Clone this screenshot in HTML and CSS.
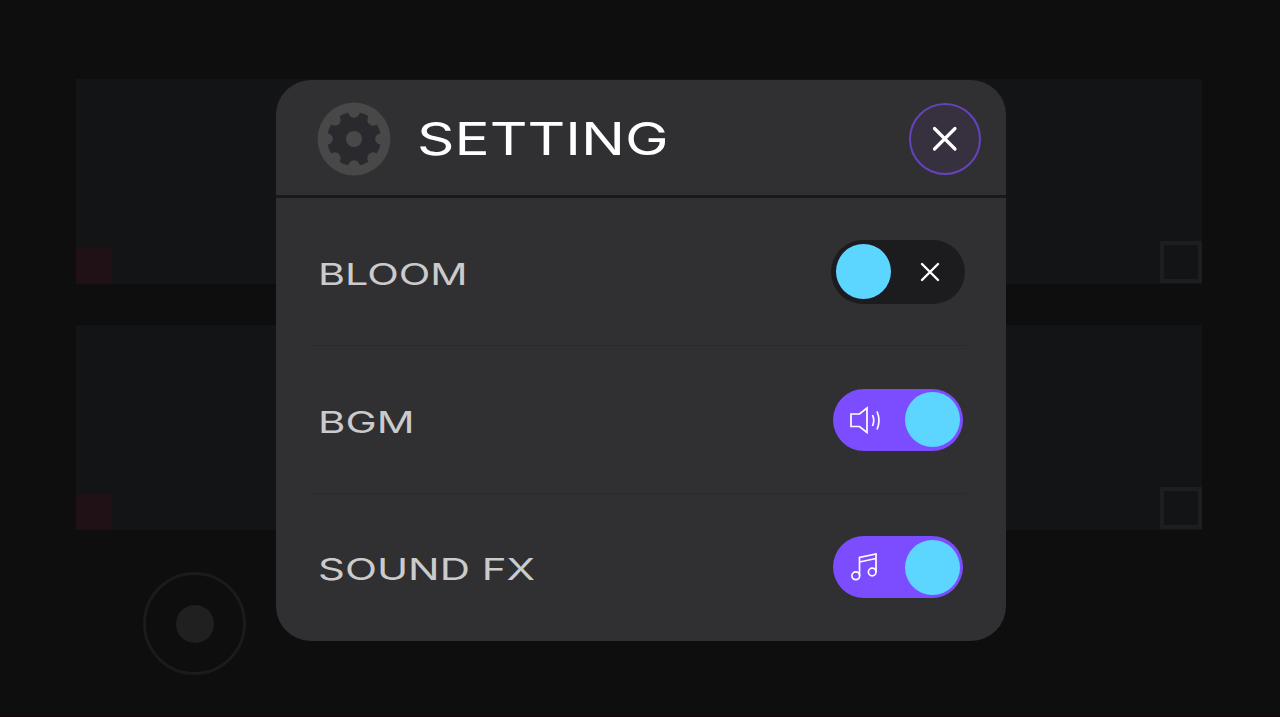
FILE: index.html
```html
<!DOCTYPE html>
<html lang="en">
<head>
    <meta charset="UTF-8">
    <meta name="viewport" content="width=device-width, initial-scale=1.0">
    <title>Setting</title>
    <link rel="stylesheet" href="styles.css">
</head>
<body>
    <div class="backdrop">
        <div class="panel">
            <span class="marker"></span>
            <span class="checkbox"></span>
        </div>
        <div class="panel">
            <span class="marker"></span>
            <span class="checkbox"></span>
        </div>
        <div class="ring"><span class="ring-dot"></span></div>
    </div>

    <div class="overlay">
        <div class="modal">
            <div class="modal-header">
                <svg class="gear" viewBox="0 0 74 74">
                    <circle cx="37" cy="37" r="36.4" fill="#484849"/>
                    <circle cx="37" cy="37" r="27" fill="#2a2a2e"/>
                    <g fill="#484849">
                        <circle cx="37" cy="10" r="5.8"/>
                        <circle cx="56.1" cy="17.9" r="5.8"/>
                        <circle cx="64" cy="37" r="5.8"/>
                        <circle cx="56.1" cy="56.1" r="5.8"/>
                        <circle cx="37" cy="64" r="5.8"/>
                        <circle cx="17.9" cy="56.1" r="5.8"/>
                        <circle cx="10" cy="37" r="5.8"/>
                        <circle cx="17.9" cy="17.9" r="5.8"/>
                        <circle cx="37" cy="37" r="8"/>
                    </g>
                </svg>
                <h1 class="title"><span class="wide">SETTING</span></h1>
                <button class="close" aria-label="Close">
                    <svg width="28" height="28" viewBox="0 0 28 28"><path d="M3.500 3.500L24 24M24 3.500L3.500 24"/></svg>
                </button>
            </div>
            <div class="rows">
                <div class="row">
                    <span class="label"><span class="wide bloom">BLOOM</span></span>
                    <div class="toggle off">
                        <span class="knob"></span>
                        <svg class="icon cross" width="20" height="20" viewBox="0 0 20 20"><path d="M2 2L18 18M18 2L2 18"/></svg>
                    </div>
                </div>
                <div class="row">
                    <span class="label"><span class="wide bgm">BGM</span></span>
                    <div class="toggle on">
                        <svg class="icon" width="32" height="28" viewBox="0 0 32 28"><path d="M2 8H10.500L18 2V26.500L10.500 20.500H2ZM23.500 9Q26 14.500 23.500 20M28 5.500Q32 14.500 28 23.500"/></svg>
                        <span class="knob"></span>
                    </div>
                </div>
                <div class="row">
                    <span class="label"><span class="wide sound">SOUND FX</span></span>
                    <div class="toggle on">
                        <svg class="icon" width="32" height="28" viewBox="0 0 32 28"><path d="M10.500 22.500V4.500L27 1V19M10.500 9L27 5.500"/><circle cx="6.800" cy="22.800" r="3.900"/><circle cx="23.200" cy="19" r="3.800"/></svg>
                        <span class="knob"></span>
                    </div>
                </div>
            </div>
        </div>
    </div>
</body>
</html>
```
FILE: styles.css
```css
* {
    box-sizing: border-box;
}
body {
    margin: 0;
    height: 717px;
    overflow: hidden;
    background-color: #0e0e0e;
    font-family: Inter, "Liberation Sans", sans-serif;
}
.backdrop {
    height: 717px;
    padding: 79px 78px 0 76px;
    border-bottom: 1px solid #12060b;
}
.panel {
    display: flex;
    justify-content: space-between;
    align-items: flex-end;
    height: 205px;
    margin-bottom: 41px;
    padding-bottom: 1px;
    background-color: #131416;
}
.panel + .ring {
    margin-top: 42px;
}
.marker {
    width: 36px;
    height: 35px;
    background-color: #1f1115;
}
.checkbox {
    width: 42px;
    height: 42px;
    border: 4px solid #1c1e1f;
}
.ring {
    display: flex;
    justify-content: center;
    align-items: center;
    width: 103px;
    height: 103px;
    margin-left: 67px;
    border: 3px solid #1b1b1b;
    border-radius: 50%;
}
.ring-dot {
    width: 38px;
    height: 38px;
    border-radius: 50%;
    background-color: #202020;
}
.overlay {
    position: absolute;
    top: 0;
    left: 0;
    width: 1280px;
    height: 717px;
    padding: 80px 274px 0 276px;
}
.modal {
    height: 561px;
    border-radius: 35px;
    background-color: #303032;
}
.modal-header {
    display: flex;
    align-items: center;
    height: 118px;
    padding: 0 25px 0 41px;
    border-bottom: 3px solid #19191b;
}
.gear {
    width: 74px;
    height: 74px;
    margin-top: 2px;
}
.title {
    flex: 1;
    margin: 2px 0 0 26px;
    color: #fff;
    font-size: 45px;
    font-weight: 400;
    line-height: 54px;
}
/* stretched capitals */
.wide {
    display: inline-block;
    white-space: nowrap;
    transform: scaleX(1.3);
    transform-origin: left center;
}
.wide.bloom {
    transform: scaleX(1.4);
}
.wide.bgm {
    transform: scaleX(1.42);
}
.wide.sound {
    transform: scaleX(1.42);
}
.close {
    display: flex;
    justify-content: center;
    align-items: center;
    width: 72px;
    height: 72px;
    margin-top: 2px;
    padding: 0;
    border: 2px solid #6642bd;
    border-radius: 50%;
    background-color: #37303e;
}
.close svg {
    fill: none;
    stroke: #fff;
    stroke-width: 3.200;
    stroke-linecap: round;
}
.rows {
    padding: 0 39px 0 36px;
}
.row {
    display: flex;
    justify-content: space-between;
    align-items: center;
    height: 148px;
    padding-left: 6px;
    border-bottom: 1px solid #2b2b2d;
}
.row:last-child {
    height: 146px;
    border-bottom: none;
}
.label {
    color: #cbcbcc;
    font-size: 29.500px;
    font-weight: 400;
    line-height: 36px;
    padding-top: 4px;
}
.toggle {
    display: flex;
    align-items: center;
    justify-content: space-between;
    border-radius: 32px;
}
.toggle.off {
    width: 134px;
    height: 64px;
    margin-right: 2px;
    padding: 0 25px 0 5px;
    background-color: #1c1c1e;
}
.toggle.on {
    width: 130px;
    height: 62px;
    margin-right: 4px;
    padding: 0 3.500px 0 16px;
    background-color: #7b4dff;
}
.knob {
    width: 55px;
    height: 55px;
    border-radius: 50%;
    background-color: #5cd6ff;
}
.icon {
    fill: none;
    stroke: #fff;
    stroke-width: 1.700;
}
.icon.cross {
    stroke-width: 2.400;
    stroke-linecap: round;
}
```
